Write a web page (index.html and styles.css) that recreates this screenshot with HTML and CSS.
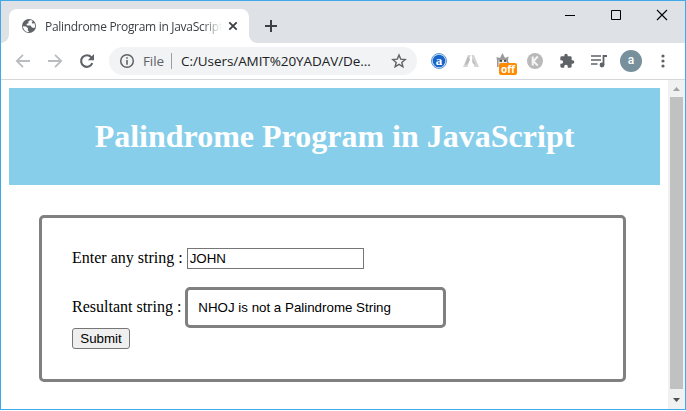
FILE: index.html
```html
<!DOCTYPE html>
<html lang="en">
<head>
<meta charset="utf-8">
<title>Palindrome Program in JavaScript</title>
<link rel="stylesheet" href="styles.css">
</head>
<body>
<div class="window">
  <div class="tabstrip">
    <div class="tab">
      <svg class="globe" width="16" height="16" viewBox="0 0 16 16"><circle cx="8" cy="8" r="7" fill="#5f6368"/><path d="M1.800 8.200 5 8.500 7.200 10.500 6.600 12.100 8 13.400 7 14.200Q2.500 13 1.800 8.200ZM9.500 2 7.300 3.600 7.500 5.200 5.400 6 6 7.600 9.500 7.600 11 9.400 13.500 10Q14.600 7.800 13.500 5.200L11.300 5.600 10.600 4 12 3.300Q11 2.300 9.500 2Z" fill="#fff"/></svg>
      <span class="tab-title">Palindrome Program in JavaScript</span>
      <svg class="tab-close" width="10" height="10" viewBox="0 0 10 10"><path d="M1.300 1.300 8.700 8.700M8.700 1.300 1.300 8.700" stroke="#3c4043" stroke-width="1.800"/></svg>
    </div>
    <svg class="new-tab" width="14" height="14" viewBox="0 0 14 14"><path d="M7 1V13M1 7H13" stroke="#3c4043" stroke-width="2"/></svg>
    <div class="controls">
      <svg width="46" height="28" viewBox="0 0 46 28"><path d="M18 14.500H28" stroke="#000"/></svg>
      <svg width="46" height="28" viewBox="0 0 46 28"><path d="M18.500 9.500H27.500V18.500H18.500Z" fill="none" stroke="#000"/></svg>
      <svg width="46" height="28" viewBox="0 0 46 28"><path d="M18 9 28 19M28 9 18 19" stroke="#000" stroke-width="1.100"/></svg>
    </div>
  </div>
  <div class="toolbar">
    <div class="nav">
      <svg width="16" height="16" viewBox="0 0 16 16"><path d="M15 8H2M8 1.800 1.800 8 8 14.200" fill="none" stroke="#babcbe" stroke-width="1.800"/></svg>
      <svg width="16" height="16" viewBox="0 0 16 16"><path d="M1 8H14M8 1.800 14.200 8 8 14.200" fill="none" stroke="#babcbe" stroke-width="1.800"/></svg>
      <svg width="16" height="16" viewBox="0 0 16 16"><path d="M13.300 10.200A5.800 5.800 0 1 1 12.300 4.200" fill="none" stroke="#5f6368" stroke-width="2.100"/><path d="M15 1V7.200H8.800Z" fill="#5f6368"/></svg>
    </div>
    <div class="address">
      <svg width="16" height="16" viewBox="0 0 16 16"><circle cx="8" cy="8" r="6.300" fill="none" stroke="#5f6368" stroke-width="1.500"/><path d="M8 7V11.800M8 4.300V5.800" stroke="#5f6368" stroke-width="1.600"/></svg>
      <span class="scheme">File</span>
      <span class="divider"></span>
      <span class="path">C:/Users/AMIT%20YADAV/De...</span>
      <svg class="star" width="16" height="16" viewBox="0 0 16 16"><path d="M8 2 9.700 6.100 14.200 6.500 10.800 9.400 11.900 13.800 8 11.400 4.100 13.800 5.200 9.400 1.800 6.500 6.300 6.100Z" fill="none" stroke="#5f6368" stroke-width="1.400"/></svg>
    </div>
    <div class="extensions">
      <svg width="16" height="16" viewBox="0 0 16 16"><circle cx="8" cy="8" r="7.500" fill="#dceafb" stroke="#5e96d8"/><circle cx="8" cy="8" r="6.300" fill="#1764c9"/><text x="8" y="11.700" class="badge-letter">a</text></svg>
      <svg width="16" height="16" viewBox="0 0 16 16"><path d="M5 2H7.500L4.600 14H0ZM8.500 2H11L16 14H11.400Z" fill="#d4d4d4"/><path d="M5 3 7 7 4.500 11 2 12ZM9 5 13 12 9.500 10Z" fill="#bababa"/></svg>
      <div class="ghost"><svg width="16" height="16" viewBox="0 0 16 16"><path d="M2 14V8L1.500 4 5 5 7.500 0 10 5 13.500 3.500 13 8 14 10V14Z" fill="#9a9a9a"/><path d="M3.500 7H12V14H3.500Z" fill="#e6e6e6"/><path d="M4.500 7H7V8.800H4.500ZM9 7H11.500V8.800H9Z" fill="#444"/></svg><span class="off">off</span></div>
      <svg width="16" height="16" viewBox="0 0 16 16"><circle cx="8" cy="8" r="8" fill="#b9b9b9"/><path d="M5.700 3.500V12.500M10.800 3.500 6.300 8.200 10.800 12.500" fill="none" stroke="#f5f5f5" stroke-width="2"/></svg>
      <svg width="16" height="16" viewBox="0 0 24 24"><path d="M20.500 11H19V7a2 2 0 0 0-2-2h-4V3.500a2.500 2.500 0 0 0-5 0V5H4a2 2 0 0 0-2 2v3.800h1.500a2.700 2.700 0 0 1 0 5.400H2V20a2 2 0 0 0 2 2h3.800v-1.500a2.700 2.700 0 0 1 5.400 0V22H17a2 2 0 0 0 2-2v-4h1.500a2.500 2.500 0 0 0 0-5z" fill="#5f6368"/></svg>
      <svg width="16" height="14" viewBox="0 0 16 14"><path d="M0 2H10M0 6H10M0 10H6.500" stroke="#5f6368" stroke-width="1.600"/><path d="M12.500 11V2H16" fill="none" stroke="#5f6368" stroke-width="1.800"/><circle cx="11" cy="11" r="2.400" fill="#5f6368"/></svg>
      <span class="avatar">a</span>
      <svg class="more" width="4" height="14" viewBox="0 0 4 14"><circle cx="2" cy="2" r="1.600" fill="#5f6368"/><circle cx="2" cy="7" r="1.600" fill="#5f6368"/><circle cx="2" cy="12" r="1.600" fill="#5f6368"/></svg>
    </div>
  </div>
  <div class="viewport">
    <main class="page">
      <h1 class="heading">Palindrome Program in JavaScript</h1>
      <form class="form">
        <div class="row first"><label for="word">Enter any string :</label><input id="word" class="word" type="text" value="JOHN"></div>
        <div class="row second"><label for="result">Resultant string :</label><input id="result" class="result" type="text" value="NHOJ is not a Palindrome String"></div>
        <button class="submit" type="button">Submit</button>
      </form>
    </main>
    <div class="scrollbar">
      <svg width="17" height="17" viewBox="0 0 17 17"><path d="M5 11 8.500 7 12 11Z" fill="#a3a3a3"/></svg>
      <div class="thumb"></div>
      <svg width="17" height="20" viewBox="0 0 17 20"><path d="M5 9 8.500 13 12 9Z" fill="#505050"/></svg>
    </div>
  </div>
</div>
</body>
</html>
```
FILE: styles.css
```css
* { box-sizing: border-box; }
body { margin: 0; background: #fff; overflow: hidden; }
svg { display: block; flex: none; }
.window { width: 686px; height: 410px; border: 1px solid #3fa9ea; display: flex; flex-direction: column; background: #fff; }

.tabstrip { height: 42px; flex: none; background: #dee1e6; display: flex; align-items: flex-start; font-family: "Open Sans", sans-serif; }
.tab { position: relative; width: 240px; height: 34px; margin: 8px 0 0 8px; padding: 0 11px 0 12px; background: #fff; border-radius: 8px 8px 0 0; display: flex; align-items: center; }
.tab::before, .tab::after { content: ""; position: absolute; bottom: 0; width: 8px; height: 8px; }
.tab::before { left: -8px; background: radial-gradient(circle at 0 0, transparent 7.5px, #fff 8px); }
.tab::after { right: -8px; background: radial-gradient(circle at 100% 0, transparent 7.5px, #fff 8px); }
.tab-title { margin-left: 8px; width: 177px; overflow: hidden; white-space: nowrap; font-size: 12px; letter-spacing: -.3px; color: #3c4043; -webkit-mask-image: linear-gradient(90deg, #000 157px, transparent 177px); mask-image: linear-gradient(90deg, #000 157px, transparent 177px); }
.tab-close { margin-left: auto; }
.new-tab { margin: 18px 0 0 15px; }
.controls { display: flex; margin-left: auto; }

.toolbar { height: 37px; flex: none; border-bottom: 1px solid #d5d7da; display: flex; align-items: center; font-family: "Open Sans", sans-serif; }
.nav { display: flex; gap: 16px; margin-left: 14px; }
.address { width: 308px; height: 28px; margin-left: 14px; padding: 0 10px; border-radius: 14px; background: #f1f3f4; display: flex; align-items: center; color: #202124; font-size: 13.5px; white-space: nowrap; }
.scheme { width: 28px; margin-left: 8px; color: #5f6368; letter-spacing: -.1px; }
.divider { width: 1px; height: 16px; background: #9aa0a6; }
.path { margin-left: 9px; letter-spacing: -.07px; }
.star { margin-left: auto; }
.extensions { display: flex; align-items: center; margin-left: 14px; gap: 16px; }
.badge-letter { font: bold 13px "Liberation Serif", serif; fill: #fff; text-anchor: middle; }
.ghost { position: relative; }
.off { position: absolute; left: 4px; top: 10px; width: 18px; height: 12px; border-radius: 2px; background: #ff8c00; color: #fff; font: bold 10px/12px "Open Sans", sans-serif; text-align: center; }
.avatar { width: 22px; height: 22px; margin-left: -3px; border-radius: 50%; background: #78909c; color: #fff; font: 500 12px/21px Roboto, sans-serif; text-align: center; }
.more { margin-left: 3px; }

.viewport { flex: 1; min-height: 0; display: flex; }
.page { flex: 1; padding: 8px; font: 16px "Liberation Serif", serif; color: #000; }
.heading { margin: 0; height: 97px; background: skyblue; color: #fff; font-size: 32px; line-height: 97px; text-align: center; }
.form { width: 587px; height: 167px; margin: 30px 0 0 30px; padding: 30px; border: 3px solid gray; border-radius: 5px; }
.row { display: flex; align-items: center; }
.row label { padding-bottom: 1px; }
.first { height: 21px; }
.second { height: 41px; margin-top: 18px; }
.word { width: 177px; height: 21px; margin: 0 0 0 4px; padding: 1px 2px; border: 1px solid #767676; font: 13.333px "Liberation Sans", sans-serif; }
.result { width: 261px; height: 41px; margin: 0 0 0 4px; padding: 0 10px; border: 3px solid gray; border-radius: 5px; font: 13.333px "Liberation Sans", sans-serif; }
.submit { display: block; width: 58px; height: 21px; padding: 0; border: 1px solid #767676; border-radius: 3px; background: #efefef; color: #000; font: 13.333px "Liberation Sans", sans-serif; }
.scrollbar { width: 17px; background: #f1f1f1; display: flex; flex-direction: column; }
.thumb { flex: 1; margin: 0 2px; background: #c1c1c1; }
```
